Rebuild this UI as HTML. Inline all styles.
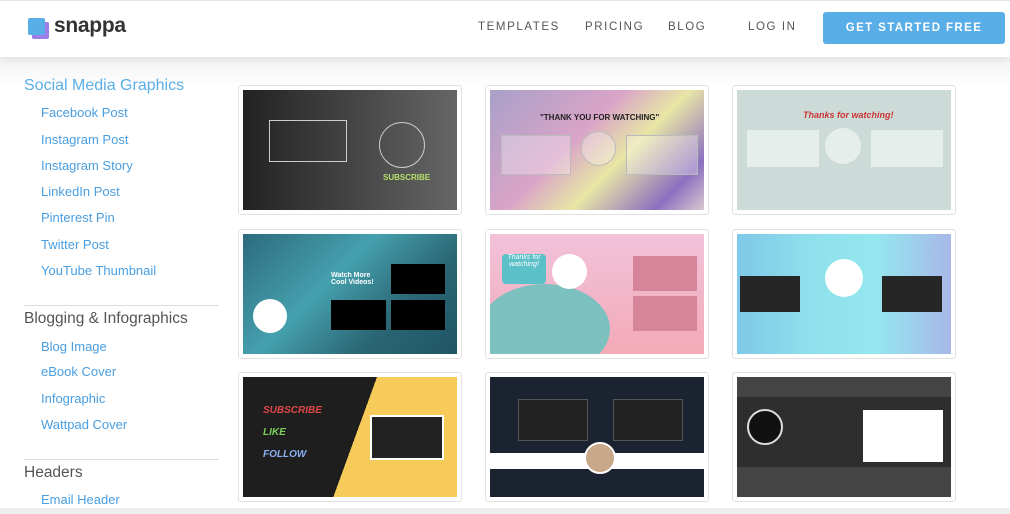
<!DOCTYPE html>
<html><head><style>
*{margin:0;padding:0;box-sizing:border-box}
body{width:1010px;height:514px;overflow:hidden;background:#fff;font-family:"Liberation Sans",sans-serif;position:relative}
.hdr{position:absolute;left:0;top:0;width:1010px;height:57px;background:#fff;border-top:1px solid #e4e4e4;box-shadow:0 2px 8px rgba(0,0,0,.08);z-index:2}
.logo{position:absolute;left:28px;top:17px}
.nav{position:absolute;top:20px;font-size:11.5px;letter-spacing:1.6px;color:#555}
.btn{position:absolute;left:823px;top:11px;width:182px;height:32px;background:#5aaee8;border-radius:3px;color:#fff;font-size:11.5px;letter-spacing:1.4px;font-weight:bold;text-align:center;line-height:32px}
.main{position:absolute;top:57px;left:0;width:1010px;height:451px;background:linear-gradient(#f2f2f2,#fff 30px);overflow:hidden}
.h{position:absolute;left:24px;font-size:15.5px;color:#555}
.i{position:absolute;left:41px;font-size:13px;color:#4a9ee0}
.ln{position:absolute;left:24px;width:195px;height:1px;background:#ddd}
.c{position:absolute;width:224px;height:130px;background:#fff;border:1px solid #e2e2e2;border-radius:3px;padding:4px}
.c div{width:100%;height:100%;position:relative;overflow:hidden}
.bot{position:absolute;left:0;top:508px;width:1010px;height:6px;background:#eee}
</style></head><body>
<div class="hdr">
<div class="logo">
<div style="position:absolute;left:4px;top:4px;width:17px;height:17px;background:#9d7ee8;border-radius:2px"></div>
<div style="position:absolute;left:0;top:0;width:17px;height:17px;background:#5aaee8;border-radius:2px"></div>
<span style="position:absolute;left:26px;top:-4px;font-size:21px;color:#333;font-weight:bold;letter-spacing:-.3px">snappa</span>
</div>
<span class="nav" style="left:478px">TEMPLATES</span>
<span class="nav" style="left:585px">PRICING</span>
<span class="nav" style="left:668px">BLOG</span>
<span class="nav" style="left:748px">LOG IN</span>
<div class="btn">GET STARTED FREE</div>
</div>
<div class="main">
<div class="h" style="top:20px;color:#5aaee8;font-size:16px">Social Media Graphics</div>
<div class="i" style="top:48px">Facebook Post</div>
<div class="i" style="top:75px">Instagram Post</div>
<div class="i" style="top:101px">Instagram Story</div>
<div class="i" style="top:127px">LinkedIn Post</div>
<div class="i" style="top:153px">Pinterest Pin</div>
<div class="i" style="top:180px">Twitter Post</div>
<div class="i" style="top:206px">YouTube Thumbnail</div>
<div class="ln" style="top:248px"></div>
<div class="h" style="top:253px">Blogging &amp; Infographics</div>
<div class="i" style="top:282px">Blog Image</div>
<div class="i" style="top:307px">eBook Cover</div>
<div class="i" style="top:334px">Infographic</div>
<div class="i" style="top:360px">Wattpad Cover</div>
<div class="ln" style="top:402px"></div>
<div class="h" style="top:407px">Headers</div>
<div class="i" style="top:435px">Email Header</div>
</div>
<div class="c" style="left:238px;top:85px"><div style="background:linear-gradient(90deg,#222,#666)">
<div style="position:absolute;left:26px;top:30px;width:78px;height:42px;border:1px solid #ccc"></div>
<div style="position:absolute;left:136px;top:32px;width:46px;height:46px;border:1px solid #ccc;border-radius:50%"></div>
<div style="position:absolute;left:140px;top:83px;color:#b5e06a;font-size:8px;font-weight:bold">SUBSCRIBE</div></div></div>
<div class="c" style="left:485px;top:85px"><div style="background:linear-gradient(135deg,#a8a0c8,#d9a4c8 40%,#e8e6a6 60%,#8c70c0 85%,#d8c8d0)">
<div style="position:absolute;left:50px;top:23px;font-size:8px;font-weight:bold;color:#222">"THANK YOU FOR WATCHING"</div>
<div style="position:absolute;left:11px;top:45px;width:70px;height:40px;background:rgba(255,255,255,.3);border:1px solid #bbb"></div>
<div style="position:absolute;left:91px;top:41px;width:35px;height:35px;border-radius:50%;background:rgba(255,255,255,.3);border:1px solid #bbb"></div>
<div style="position:absolute;left:136px;top:45px;width:72px;height:40px;background:rgba(255,255,255,.3);border:1px solid #bbb"></div></div></div>
<div class="c" style="left:732px;top:85px"><div style="background:#cddbd8">
<div style="position:absolute;left:66px;top:20px;font-size:9px;font-weight:bold;font-style:italic;color:#c33">Thanks for watching!</div>
<div style="position:absolute;left:10px;top:40px;width:72px;height:37px;background:#e6eeec"></div>
<div style="position:absolute;left:88px;top:38px;width:36px;height:36px;border-radius:50%;background:#e6eeec"></div>
<div style="position:absolute;left:134px;top:40px;width:72px;height:37px;background:#e6eeec"></div></div></div>
<div class="c" style="left:238px;top:229px"><div style="background:linear-gradient(135deg,#2c6b7e,#45a0ad 40%,#2b6674 70%,#1e5566)">
<div style="position:absolute;left:88px;top:38px;color:#fff;font-size:7px;font-weight:bold">Watch More<br>Cool Videos!</div>
<div style="position:absolute;left:148px;top:30px;width:54px;height:30px;background:#000"></div>
<div style="position:absolute;left:88px;top:66px;width:55px;height:30px;background:#000"></div>
<div style="position:absolute;left:148px;top:66px;width:54px;height:30px;background:#000"></div>
<div style="position:absolute;left:10px;top:65px;width:34px;height:34px;border-radius:50%;background:#fff"></div></div></div>
<div class="c" style="left:485px;top:229px"><div style="background:linear-gradient(#f2c2da,#f3aab8)">
<div style="position:absolute;left:-10px;top:50px;width:130px;height:90px;border-radius:50%;background:#7cc0c0"></div>
<div style="position:absolute;left:12px;top:20px;width:44px;height:30px;background:#5bc0c8;border-radius:4px;color:#fff;font-size:7px;font-style:italic;text-align:center">Thanks for watching!</div>
<div style="position:absolute;left:62px;top:20px;width:35px;height:35px;border-radius:50%;background:#fff"></div>
<div style="position:absolute;left:143px;top:22px;width:64px;height:35px;background:#d6849a"></div>
<div style="position:absolute;left:143px;top:62px;width:64px;height:35px;background:#d6849a"></div></div></div>
<div class="c" style="left:732px;top:229px"><div style="background:linear-gradient(90deg,#7ec9e8,#8fe0ec 35%,#94e6ee 65%,#a8b8e8)">
<div style="position:absolute;left:3px;top:42px;width:60px;height:36px;background:#262626"></div>
<div style="position:absolute;left:145px;top:42px;width:60px;height:36px;background:#262626"></div>
<div style="position:absolute;left:88px;top:25px;width:38px;height:38px;border-radius:50%;background:#fff"></div></div></div>
<div class="c" style="left:238px;top:372px"><div style="background:linear-gradient(110deg,#1e1e1e 52%,#f7cb5a 52%)">
<div style="position:absolute;left:20px;top:28px;color:#e04848;font-size:10px;font-weight:bold;font-style:italic">SUBSCRIBE</div>
<div style="position:absolute;left:20px;top:50px;color:#7cd05c;font-size:10px;font-weight:bold;font-style:italic">LIKE</div>
<div style="position:absolute;left:20px;top:72px;color:#8ab0f0;font-size:10px;font-weight:bold;font-style:italic">FOLLOW</div>
<div style="position:absolute;left:127px;top:38px;width:74px;height:45px;background:#222;border:2px solid #fff"></div></div></div>
<div class="c" style="left:485px;top:372px"><div style="background:#1b2230">
<div style="position:absolute;left:28px;top:22px;width:70px;height:42px;background:#222;border:1px solid #555"></div>
<div style="position:absolute;left:123px;top:22px;width:70px;height:42px;background:#222;border:1px solid #555"></div>
<div style="position:absolute;left:0;top:76px;width:100%;height:16px;background:#fff"></div>
<div style="position:absolute;left:94px;top:65px;width:32px;height:32px;border-radius:50%;background:#c8a888;border:2px solid #fff"></div></div></div>
<div class="c" style="left:732px;top:372px"><div style="background:#444">
<div style="position:absolute;left:0;top:20px;width:100%;height:70px;background:#2e2e2e"></div>
<div style="position:absolute;left:10px;top:32px;width:36px;height:36px;border-radius:50%;background:#111;border:2px solid #ddd"></div>
<div style="position:absolute;left:126px;top:33px;width:80px;height:52px;background:#fff"></div></div></div>
<div class="bot"></div>
</body></html>
